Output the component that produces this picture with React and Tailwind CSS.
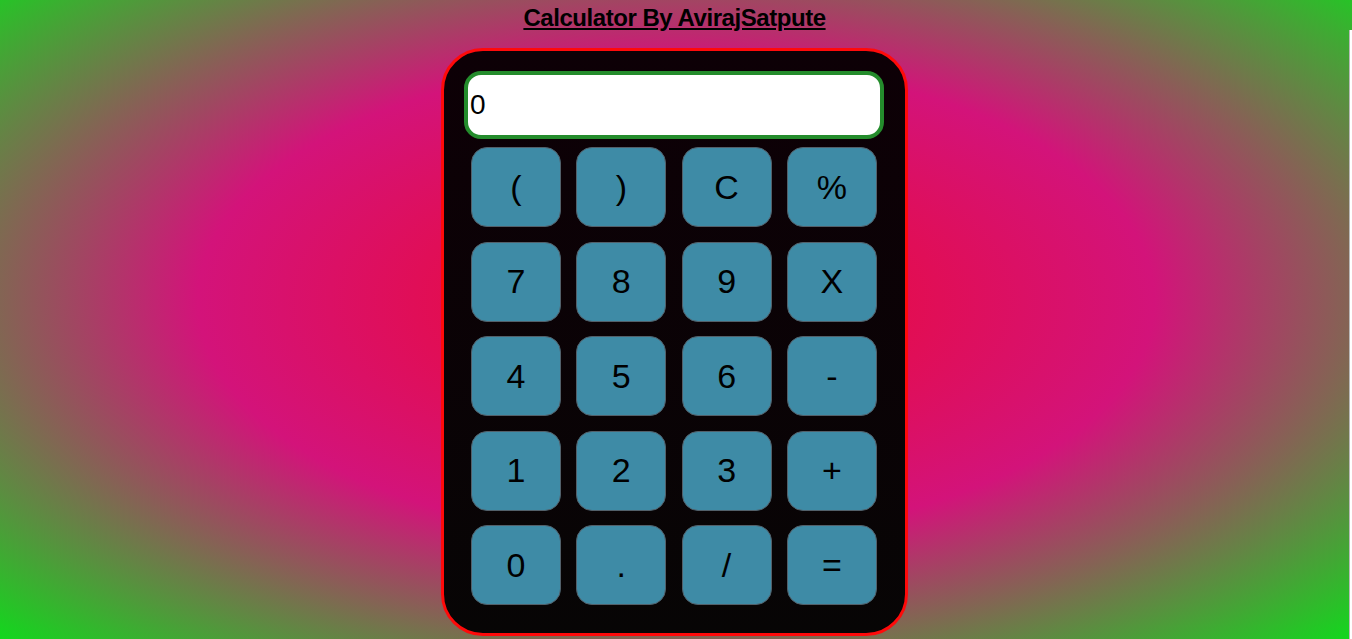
const keys = ['(', ')', 'C', '%', '7', '8', '9', 'X', '4', '5', '6', '-', '1', '2', '3', '+', '0', '.', '/', '=']

export default function App() {
  return (
    <div className="relative h-[639px] w-full overflow-hidden bg-[radial-gradient(ellipse_farthest-corner_at_50%_47%,#f0082e_0%,#d3137a_50%,#12d81d_100%)]">
      {/* title */}
      <div className="flex w-[1349px] flex-col items-center">
        <h1 className="mt-[4px] text-[24px] leading-[28px] font-bold tracking-[-0.45px] underline underline-offset-[2px] text-black font-['Liberation_Sans',Arial,sans-serif]">
          Calculator By AvirajSatpute
        </h1>

        {/* calculator body */}
        <div className="mt-[16px] w-[467px] rounded-[42px] border-[3px] border-[#ff0a0a] bg-gradient-to-b from-[#0d0006] to-[#070505] px-[20px] pt-[20px] pb-[28px]">
          <div className="flex h-[68px] w-[420px] items-center rounded-[17px] border-[4px] border-[#248c2c] bg-white pl-[2px] text-[28px] text-black font-['Liberation_Sans',Arial,sans-serif]">
            0
          </div>

          <div className="mt-[8px] grid grid-cols-[repeat(4,90px)] gap-x-[15.3px] gap-y-[14.5px] pl-[7px]">
            {keys.map(k => (
              <button key={k}
                className="flex h-[80px] w-[90px] items-center justify-center rounded-[16px] border border-[#52606a] bg-[#3e8ba6] text-[34px] text-black font-['Liberation_Sans',Arial,sans-serif]">
                {k}
              </button>
            ))}
          </div>
        </div>
      </div>

      {/* right edge strip */}
      <div className="absolute right-0 top-[30px] bottom-0 w-[3px] border-l border-[#b8b8b8] bg-white" />
    </div>
  )
}
